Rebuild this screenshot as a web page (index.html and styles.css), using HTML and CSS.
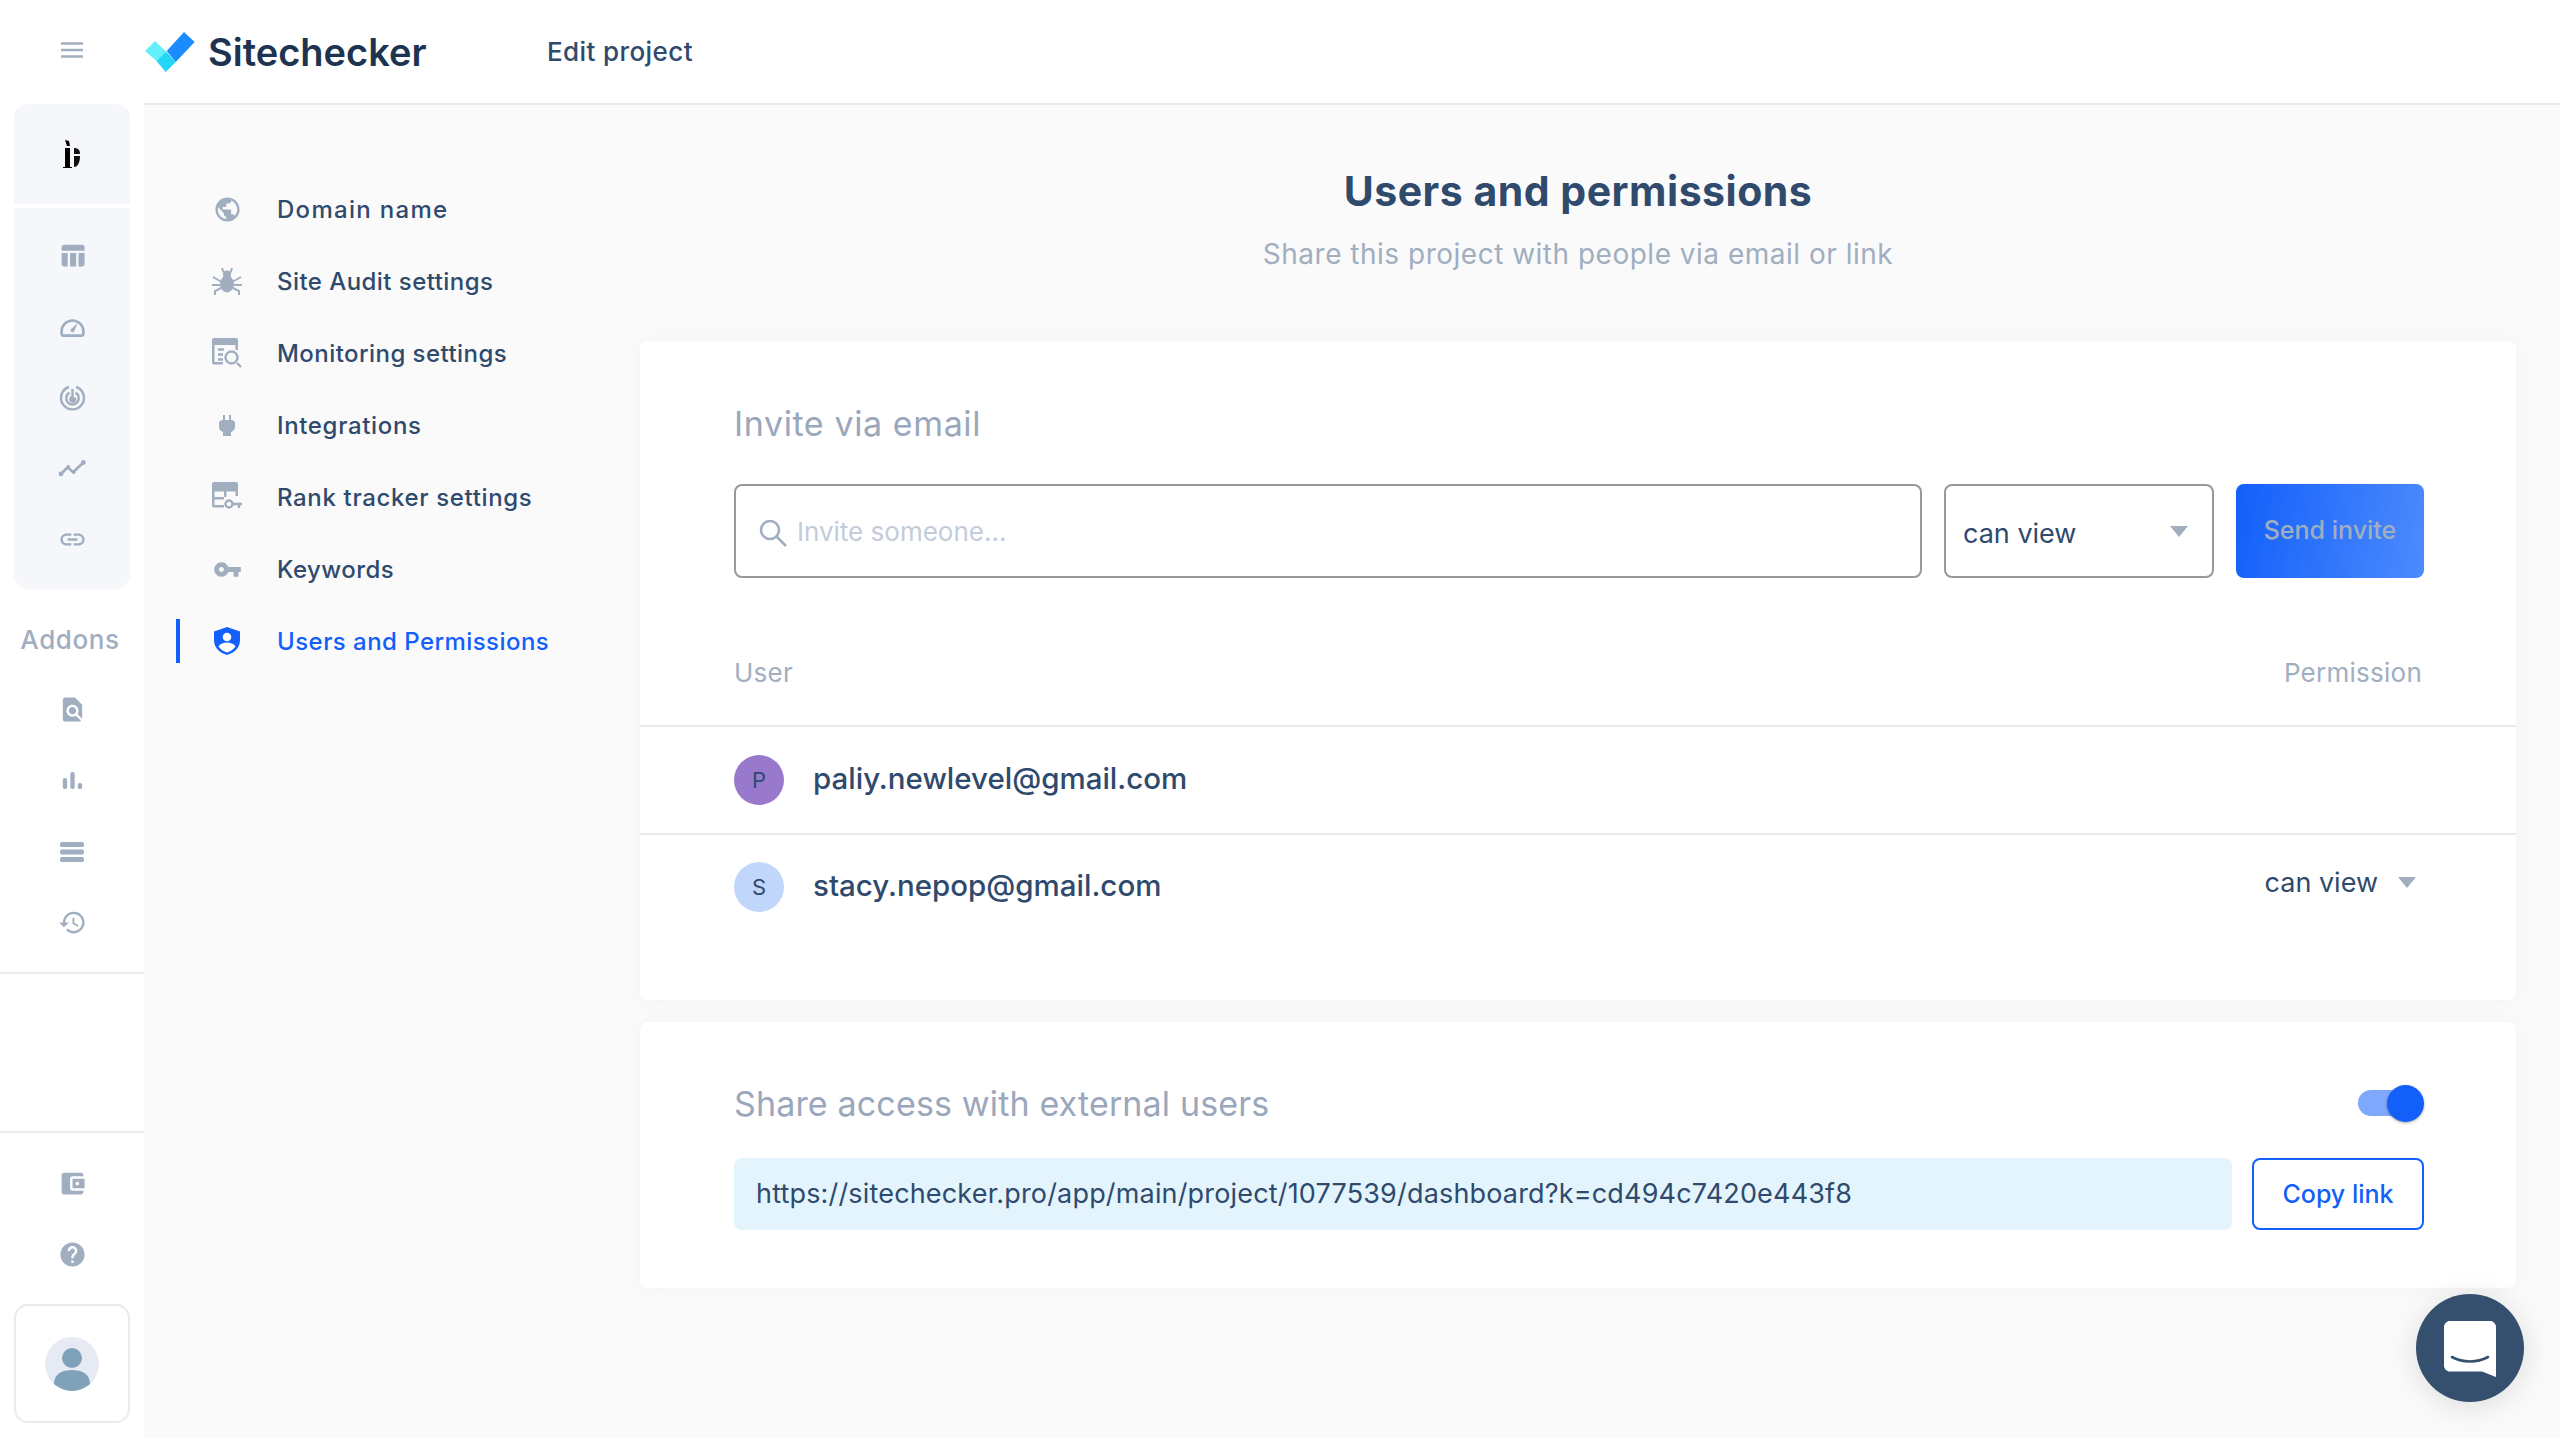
FILE: index.html
```html
<!DOCTYPE html>
<html lang="en">
<head>
<meta charset="utf-8">
<title>Sitechecker - Edit project</title>
<link rel="stylesheet" href="styles.css">
</head>
<body>
<div class="app">
  <aside class="rail">
    <div class="rail-top">
      <svg class="ic-menu" viewBox="0 0 22 16"><path d="M0 1.500h22M0 8h22M0 14.500h22"/></svg>
    </div>
    <div class="rail-block rail-brand">
      <svg class="ic-broken" viewBox="0 0 18 28"><path d="M2 0l4 1 1 5H4zM2 8h5v19h2v1H0v-1h2z" fill="#000"/><path d="M11 8c4 0 6 2 6 6v0h-6zM11 16h6c0 6-2 11-6 11z" fill="#111"/></svg>
    </div>
    <div class="rail-block rail-tools">
      <div class="rail-row"><svg class="ic" viewBox="0 0 24 24"><path d="M10 10.020h5V21h-5zM17 21h3c1.100 0 2-.9 2-2v-9h-5v11zm3-18H5c-1.100 0-2 .9-2 2v3h19V5c0-1.100-.9-2-2-2zM3 19c0 1.100.9 2 2 2h3V10H3v9z"/></svg></div>
      <div class="rail-row"><svg class="ic" viewBox="0 0 24 24"><path class="st" d="M4.500 19.500h15c1 0 1.500-.6 1.500-1.500v-2c0-5-4-9-9-9s-9 4-9 9v2c0 .9.500 1.500 1.500 1.500z" stroke-width="2.200"/><path d="M10.500 14.500l6-5.500-3.500 7.500c-.8 1-3.300-.8-2.500-2z"/></svg></div>
      <div class="rail-row"><svg class="ic" viewBox="0 0 24 24"><path class="st" d="M9 3.300a9.500 9.500 0 1 0 6 0" stroke-width="2"/><path class="st" d="M9.500 8a5.200 5.200 0 1 0 5 0" stroke-width="2"/><path d="M11 5h2v7.500l1.500-1a3 3 0 1 1-3.500-.8z"/></svg></div>
      <div class="rail-row"><svg class="ic" viewBox="0 0 24 24"><path class="st" d="M2 17l6-6 4.500 4L21 7" stroke-width="2.200"/><circle cx="2.500" cy="16.500" r="2"/><circle cx="8.500" cy="10.500" r="1.500"/><circle cx="13" cy="15" r="1.500"/><circle cx="21" cy="7" r="2"/></svg></div>
      <div class="rail-row"><svg class="ic" viewBox="0 0 24 24"><path d="M3.900 12c0-1.710 1.390-3.100 3.100-3.100h4V7H7c-2.760 0-5 2.240-5 5s2.240 5 5 5h4v-1.900H7c-1.710 0-3.100-1.390-3.100-3.100zM8 13h8v-2H8v2zm9-6h-4v1.900h4c1.710 0 3.100 1.390 3.100 3.100s-1.390 3.100-3.100 3.100h-4V17h4c2.760 0 5-2.240 5-5s-2.240-5-5-5z"/></svg></div>
    </div>
    <div class="rail-label">Addons</div>
    <div class="rail-row"><svg class="ic" viewBox="0 0 24 24"><path d="M20 19.590V8l-6-6H6c-1.100 0-1.990.9-1.990 2L4 20c0 1.100.89 2 1.990 2H18c.45 0 .85-.15 1.190-.4l-4.430-4.430c-.8.52-1.740.83-2.760.83-2.760 0-5-2.240-5-5s2.240-5 5-5 5 2.240 5 5c0 1.020-.31 1.960-.83 2.750L20 19.590zM9 13c0 1.660 1.340 3 3 3s3-1.340 3-3-1.340-3-3-3-3 1.340-3 3z"/></svg></div>
    <div class="rail-row"><svg class="ic" viewBox="0 0 24 24"><rect x="4" y="10" width="3.600" height="9" rx="1.500"/><rect x="10.200" y="5" width="3.600" height="14" rx="1.500"/><rect x="16.400" y="14" width="3.600" height="5" rx="1.500"/></svg></div>
    <div class="rail-row"><svg class="ic ic-lg" viewBox="0 0 24 24"><rect x="0" y="2" width="24" height="5" rx="1.800"/><rect x="0" y="9.500" width="24" height="5" rx="1.800"/><rect x="0" y="17" width="24" height="5" rx="1.800"/></svg></div>
    <div class="rail-row"><svg class="ic" viewBox="0 0 24 24"><path d="M13 3c-4.970 0-9 4.030-9 9H1l3.890 3.890.07.14L9 12H6c0-3.870 3.130-7 7-7s7 3.130 7 7-3.130 7-7 7c-1.930 0-3.680-.79-4.940-2.060l-1.420 1.420C8.270 19.990 10.510 21 13 21c4.970 0 9-4.030 9-9s-4.030-9-9-9zm-1 5v5l4.280 2.540.72-1.210-3.500-2.080V8H12z"/></svg></div>
    <div class="rail-spacer"></div>
    <div class="rail-row"><svg class="ic" viewBox="0 0 24 24"><path d="M21 18v1c0 1.100-.9 2-2 2H5c-1.110 0-2-.9-2-2V5c0-1.100.89-2 2-2h14c1.100 0 2 .9 2 2v1h-9c-1.110 0-2 .9-2 2v8c0 1.100.89 2 2 2h9zm-9-2h10V8H12v8zm4-2.500c-.83 0-1.500-.67-1.500-1.500s.67-1.500 1.500-1.500 1.500.67 1.500 1.500-.67 1.500-1.500 1.500z"/></svg></div>
    <div class="rail-row"><svg class="ic" viewBox="0 0 24 24"><path d="M12 2C6.480 2 2 6.480 2 12s4.480 10 10 10 10-4.480 10-10S17.520 2 12 2zm1 17h-2v-2h2v2zm2.070-7.750l-.9.92C13.450 12.900 13 13.500 13 15h-2v-.5c0-1.100.45-2.100 1.170-2.830l1.240-1.260c.37-.36.59-.86.59-1.410 0-1.100-.9-2-2-2s-2 .9-2 2H8c0-2.210 1.790-4 4-4s4 1.790 4 4c0 .88-.36 1.680-.93 2.250z"/></svg></div>
    <div class="rail-user">
      <svg class="user-pic" viewBox="0 0 54 54"><circle cx="27" cy="27" r="27" fill="#e6ebf3"/><circle cx="27" cy="21" r="10" fill="#7fa1b9"/><path d="M9 47c0-10 8-14 18-14s18 4 18 14c-5 4-11 7-18 7S14 51 9 47z" fill="#7fa1b9"/></svg>
    </div>
  </aside>

  <div class="main">
    <header class="topbar">
      <svg class="logo" viewBox="0 0 50 40"><path d="M0 19L10 9l11 10.500L11.500 29z" fill="#62f0fb"/><path d="M11.500 29L21 19.500 30.700 30 20.700 40z" fill="#22d6f6"/><path d="M21.700 19L39 0l10.700 10L30.700 30z" fill="#1a8cff"/></svg>
      <span class="brand">Sitechecker</span>
      <span class="page-title">Edit project</span>
    </header>
    <div class="content">
      <nav class="nav">
        <a class="nav-row wide"><span class="nav-ic"><svg class="ic" viewBox="0 0 24 24"><path d="M12 2C6.480 2 2 6.480 2 12s4.480 10 10 10 10-4.480 10-10S17.520 2 12 2zm-1 17.930c-3.950-.49-7-3.850-7-7.930 0-.62.08-1.210.21-1.790L9 15v1c0 1.100.9 2 2 2v1.930zm6.900-2.540c-.26-.81-1-1.390-1.900-1.390h-1v-3c0-.55-.45-1-1-1H8v-2h2c.55 0 1-.45 1-1V7h2c1.100 0 2-.9 2-2v-.41c2.930 1.190 5 4.060 5 7.410 0 2.080-.8 3.970-2.100 5.390z"/></svg></span>Domain name</a>
        <a class="nav-row"><span class="nav-ic"><svg class="ic ic-nav" viewBox="0 0 30 30"><ellipse cx="15" cy="18" rx="7" ry="8.500"/><circle cx="15" cy="8.500" r="4"/><path class="st" stroke-width="2" d="M10 2l1.500 4.500M20 2l-1.500 4.500M1 11l8 4.500M29 11l-8 4.500M0 19h8M30 19h-8M3 29v-4l6-3M27 29v-4l-6-3"/></svg></span>Site Audit settings</a>
        <a class="nav-row"><span class="nav-ic"><svg class="ic ic-nav" viewBox="0 0 30 30"><path d="M2 0h22c1.100 0 2 .9 2 2v10h-2.500V7H2.500v17H11v2.500H2c-1.100 0-2-.9-2-2V2C0 .9.900 0 2 0z"/><path class="st" stroke-width="2.400" d="M6 11.500h6M6 16.500h5M6 21.500h5M25 25l4 4"/><circle class="st" stroke-width="2.400" cx="19.500" cy="19.500" r="6"/></svg></span>Monitoring settings</a>
        <a class="nav-row mid"><span class="nav-ic"><svg class="ic-plug" viewBox="0 0 16 21"><path d="M4 0h2v5h4V0h2v5c2 0 4 1 4 3v4c0 3-2 4-4 5v4H4v-4c-2-1-4-2-4-5V8c0-2 2-3 4-3z"/></svg></span>Integrations</a>
        <a class="nav-row mid"><span class="nav-ic"><svg class="ic ic-nav" viewBox="0 0 30 30"><path d="M2 0h22c1.100 0 2 .9 2 2v12h-2.500V9.500h-9V15H12V9.500H2.500V15H12v2.500H2.500V23H12v2.500H2c-1.100 0-2-.9-2-2V2C0 .9.900 0 2 0z"/><circle class="st" stroke-width="2.400" cx="17" cy="22" r="3.500"/><path class="st" stroke-width="2.400" d="M20.500 22H30M27 22v4"/></svg></span>Rank tracker settings</a>
        <a class="nav-row"><span class="nav-ic"><svg class="ic" viewBox="0 0 24 24"><path d="M12.650 10C11.830 7.670 9.610 6 7 6c-3.310 0-6 2.690-6 6s2.690 6 6 6c2.610 0 4.830-1.670 5.650-4H17v4h4v-4h2v-4H12.650zM7 14c-1.100 0-2-.9-2-2s.9-2 2-2 2 .9 2 2-.9 2-2 2z"/></svg></span>Keywords</a>
        <a class="nav-row active"><span class="nav-ic"><svg class="ic ic-shield" viewBox="0 0 26 28"><path d="M13 0L0 4.500V13c0 8 6 13 13 15 7-2 13-7 13-15V4.500z"/><circle cx="13" cy="10" r="4.300" fill="#fff"/><path d="M4.500 19.500c2-3 5-4 8.500-4s6.500 1 8.500 4c-2 3-5 5-8.500 6-3.500-1-6.500-3-8.500-6z" fill="#fff"/></svg></span>Users and Permissions</a>
      </nav>

      <main class="panel">
        <h1 class="panel-title">Users and permissions</h1>
        <p class="panel-sub">Share this project with people via email or link</p>

        <section class="card card-invite">
          <div class="pad">
            <h2 class="card-title">Invite via email</h2>
            <div class="invite-form">
              <label class="field">
                <svg class="ic-search" viewBox="0 0 28 28"><circle cx="11" cy="11" r="9"/><path d="M17.500 17.500L27 27"/></svg>
                <span class="placeholder">Invite someone...</span>
              </label>
              <div class="select"><span class="select-val">can view</span><span class="caret"></span></div>
              <button class="btn-send">Send invite</button>
            </div>
          </div>
          <div class="table-head"><span>User</span><span>Permission</span></div>
          <div class="user-row first">
            <span class="avatar av-p">P</span>
            <span class="email">paliy.newlevel@gmail.com</span>
          </div>
          <div class="user-row last">
            <span class="avatar av-s">S</span>
            <span class="email">stacy.nepop@gmail.com</span>
            <span class="perm"><span>can view</span><span class="caret"></span></span>
          </div>
        </section>

        <section class="card card-share">
          <div class="share-head">
            <h2 class="card-title share-title">Share access with external users</h2>
            <span class="toggle"><span class="thumb"></span></span>
          </div>
          <div class="share-row">
            <div class="url">https://sitechecker.pro/app/main/project/1077539/dashboard?k=cd494c7420e443f8</div>
            <button class="btn-copy">Copy link</button>
          </div>
        </section>
      </main>
    </div>
  </div>
</div>
<button class="chat" aria-label="Chat">
  <svg viewBox="0 0 52 56"><path d="M6 0h40c3.300 0 6 2.700 6 6v50l-14-5.500H6c-3.300 0-6-2.700-6-6V6c0-3.300 2.700-6 6-6z" fill="#fff"/><path d="M8 36c11 6 25 6 36 0" fill="none" stroke="#35506f" stroke-width="2.600" stroke-linecap="round"/></svg>
</button>
</body>
</html>
```

FILE: styles.css
```css
* { box-sizing: border-box; }
html, body { margin: 0; padding: 0; }
body { width: 2560px; height: 1438px; overflow: hidden; background: #fff; font-family: Inter, "Open Sans", sans-serif; color: #2f4a6d; }
h1, h2, p { margin: 0; }
button { font-family: inherit; border: 0; padding: 0; }

.app { display: flex; height: 1438px; }

/* left rail */
.rail { width: 144px; flex: none; background: #fff; display: flex; flex-direction: column; }
.rail-top { height: 104px; display: flex; align-items: center; justify-content: center; flex: none; }
.ic-menu { width: 22px; height: 16px; fill: none; stroke: #a0aec0; stroke-width: 2.500; margin-bottom: 4px; }
.rail-block { margin: 0 14px; background: #f5f7fa; width: 116px; }
.rail-brand { height: 100px; border-radius: 14px 14px 0 0; display: flex; align-items: center; justify-content: center; margin-bottom: 4px; }
.ic-broken { width: 18px; height: 28px; }
.rail-tools { padding: 12px 0 14px; border-radius: 0 0 14px 14px; height: 381px; }
.rail-row { height: 71px; flex: none; display: flex; align-items: center; justify-content: center; }
.ic { width: 29px; height: 29px; fill: #a0aec0; }
.ic-lg { width: 24px; height: 24px; }
.st { fill: none; stroke: #a0aec0; }
.rail-label { margin-top: 15px; height: 70px; line-height: 71px; text-align: center; font-size: 26px; font-weight: 500; color: #a0aec0; flex: none; letter-spacing: .6px; padding-right: 4px; }
.rail-spacer { flex: none; margin-top: 14px; height: 161px; border-top: 2px solid #e8ebf0; border-bottom: 2px solid #e8ebf0; margin-bottom: 15px; }
.rail-user { margin: 14px 14px 0; width: 116px; height: 119px; border: 2px solid #e8ebf0; border-radius: 14px; display: flex; align-items: center; justify-content: center; }
.user-pic { width: 54px; height: 54px; }

/* main */
.main { flex: 1; min-width: 0; display: flex; flex-direction: column; background: #fafafa; }
.topbar { height: 105px; flex: none; background: #fff; border-bottom: 2px solid #e8ebf0; display: flex; align-items: center; padding-left: 1px; }
.logo { width: 50px; height: 40px; flex: none; margin-right: 13px; }
.brand { font-size: 38px; font-weight: 600; color: #1e3350; width: 339px; flex: none; }
.page-title { font-size: 26px; font-weight: 500; color: #2f4a6d; letter-spacing: .4px; }

.content { flex: 1; display: flex; min-height: 0; }

.nav { width: 496px; flex: none; padding: 82px 0 0 32px; display: flex; flex-direction: column; gap: 28px; }
.nav-row { height: 44px; display: flex; align-items: center; border-left: 4px solid transparent; font-size: 24px; font-weight: 500; color: #2f4a6d; letter-spacing: .45px; }
.nav-row.mid { letter-spacing: .65px; }
.nav-row.wide { letter-spacing: 1.3px; }
.nav-ic { width: 40px; height: 44px; margin: 0 30px 0 27px; display: flex; align-items: center; justify-content: center; flex: none; }
.ic-nav { width: 30px; height: 30px; }
.ic-plug { width: 16px; height: 21px; fill: #a0aec0; }
.ic-shield { width: 26px; height: 28px; fill: #125ffa; }
.nav-row.active { border-left-color: #125ffa; color: #125ffa; }

.panel { flex: 1; min-width: 0; padding: 56px 44px 0 0; }
.panel-title { font-size: 41px; line-height: 60px; font-weight: 700; text-align: center; color: #2f4a6d; letter-spacing: .5px; }
.panel-sub { margin-top: 11px; font-size: 28px; line-height: 44px; text-align: center; color: #a0aec0; letter-spacing: .5px; }

.card { background: #fff; border-radius: 8px; box-shadow: 0 0 20px rgba(0,0,0,.035); }
.card-invite { margin-top: 65px; height: 659px; }
.pad { padding: 58px 92px 0 94px; }
.card-title { font-size: 34px; line-height: 50px; font-weight: 400; color: #9aa7bc; letter-spacing: .6px; }
.share-title { letter-spacing: .15px; }
.invite-form { margin-top: 35px; display: flex; height: 94px; }
.field { width: 1188px; flex: none; border: 2px solid #999; border-radius: 8px; display: flex; align-items: center; padding-left: 23px; }
.ic-search { width: 28px; height: 28px; fill: none; stroke: #a0aec0; stroke-width: 2.600; margin-right: 10px; margin-top: 3px; }
.placeholder { font-size: 26px; color: #c2ccda; }
.select { width: 270px; flex: none; margin-left: 22px; border: 2px solid #999; border-radius: 8px; display: flex; align-items: center; justify-content: space-between; padding: 0 24px 0 17px; }
.select-val { font-size: 27px; margin-top: 4px; }
.caret { width: 0; height: 0; border-left: 9px solid transparent; border-right: 9px solid transparent; border-top: 11px solid #a0aec0; }
.btn-send { width: 188px; flex: none; margin-left: 22px; border-radius: 8px; background: linear-gradient(100deg, #125ffa 0%, #4d8bfd 100%); color: #a0aec0; font-size: 25px; font-weight: 500; padding-bottom: 2px; }

.table-head { margin-top: 73px; padding: 0 94px 30px; line-height: 44px; font-size: 26px; display: flex; justify-content: space-between; color: #a0aec0; border-bottom: 2px solid #e8ebf0; letter-spacing: .25px; }
.user-row { height: 108px; display: flex; align-items: center; padding: 0 94px; }
.user-row.first { border-bottom: 2px solid #e8ebf0; }
.user-row.last { height: 104px; }
.avatar { width: 50px; height: 50px; border-radius: 50%; flex: none; display: flex; align-items: center; justify-content: center; font-size: 22px; margin-right: 29px; color: #2f4a6d; }
.av-p { background: #9879cb; }
.av-s { background: #c0d6fb; }
.email { font-size: 29.500px; font-weight: 500; margin-top: -4px; }
.perm { margin-left: auto; display: flex; align-items: center; gap: 20px; font-size: 27px; margin-top: -10px; padding-right: 6px; }

.card-share { margin-top: 22px; height: 266px; padding: 57px 92px 0 94px; }
.share-head { display: flex; justify-content: space-between; align-items: center; height: 50px; }
.toggle { position: relative; width: 62px; height: 26px; border-radius: 13px; background: #7ea8fb; margin-right: 4px; margin-top: -2px; }
.thumb { position: absolute; right: -4px; top: -5px; width: 37px; height: 37px; border-radius: 50%; background: #125ffa; box-shadow: 0 1px 3px rgba(0,0,0,.35); }
.share-row { margin-top: 29px; display: flex; gap: 20px; height: 72px; }
.url { flex: 1; min-width: 0; background: #e3f4fd; border-radius: 8px; line-height: 71px; padding-left: 22px; font-size: 27px; letter-spacing: .17px; color: #2f4a6d; white-space: nowrap; overflow: hidden; }
.btn-copy { width: 172px; flex: none; background: #fff; border: 2px solid #125ffa; border-radius: 8px; color: #125ffa; font-size: 25px; font-weight: 500; }

.chat { position: fixed; left: 2416px; top: 1294px; width: 108px; height: 108px; border-radius: 50%; background: #35506f; box-shadow: 0 4px 30px rgba(0,0,0,.12); display: flex; align-items: center; justify-content: center; }
.chat svg { width: 52px; height: 56px; margin-top: 2px; }
```
